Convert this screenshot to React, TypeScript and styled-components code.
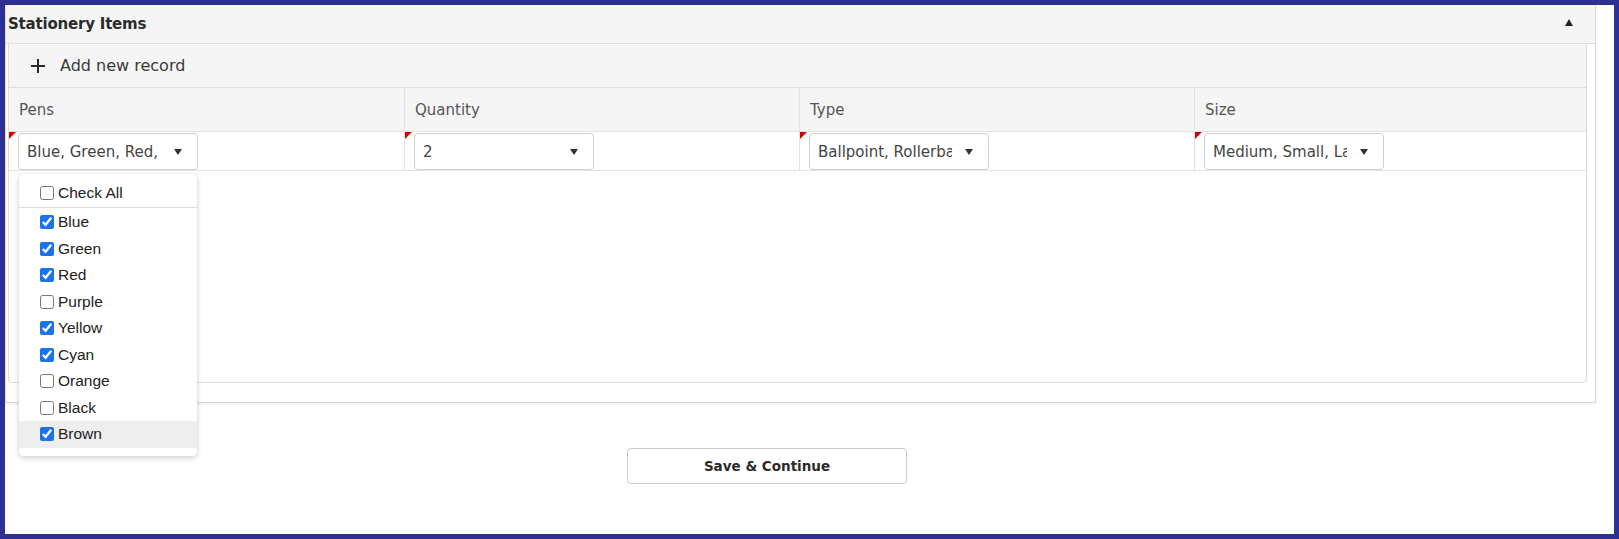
import * as React from 'react';
import styled, { createGlobalStyle } from 'styled-components';

const GlobalStyle = createGlobalStyle`
  html, body {
    margin: 0;
    padding: 0;
    background: #ffffff;
  }
  * {
    box-sizing: border-box;
  }
`;

const gothic = `"DejaVu Sans", "Liberation Sans", sans-serif`;
const arial = `"Liberation Sans", Arial, sans-serif`;

const Frame = styled.div`
  width: 1619px;
  height: 539px;
  border: 5px solid #2e3192;
  background: #ffffff;
  font-family: ${gothic};
  color: #333333;
`;

const Panel = styled.section`
  position: relative;
  height: 398px;
  margin-right: 18px;
  border: 1px solid #dadada;
  border-top: none;
  box-shadow: 0 1px 3px rgba(0, 0, 0, 0.08);
  display: flex;
  flex-direction: column;
`;

const PanelHeader = styled.header`
  height: 39px;
  flex: none;
  display: flex;
  align-items: center;
  justify-content: space-between;
  padding: 0 22px 0 2px;
  background: #f5f5f5;
  border-bottom: 1px solid #dddddd;
`;

const Title = styled.h2`
  margin: 0;
  font-size: 15px;
  font-weight: bold;
  color: #2b2b2b;
  letter-spacing: -0.2px;
`;

const CollapseArrow = styled.span`
  width: 0;
  height: 0;
  border-left: 4.5px solid transparent;
  border-right: 4.5px solid transparent;
  border-bottom: 7px solid #222222;
  margin-top: -4px;
`;

const PanelBody = styled.div`
  flex: 1;
  padding: 0 8px 19px 2px;
  display: flex;
`;

const Grid = styled.div`
  position: relative;
  flex: 1;
  display: flex;
  flex-direction: column;
  border: 1px solid #dddddd;
  border-top: none;
  border-radius: 0 0 4px 4px;
`;

const Toolbar = styled.div`
  height: 44px;
  flex: none;
  display: flex;
  align-items: center;
  gap: 14px;
  padding-left: 21px;
  background: #f5f5f5;
  border-bottom: 1px solid #dedede;
  font-size: 16px;
  color: #3a3a3a;
`;

const PlusIcon = styled.svg`
  width: 16px;
  height: 16px;
  display: block;
`;

const Row = styled.div<{ $head?: boolean }>`
  display: grid;
  grid-template-columns: 395px 395px 395px 1fr;
  height: ${({ $head }) => ($head ? '44px' : '39px')};
  flex: none;
  background: ${({ $head }) => ($head ? '#f5f5f5' : '#ffffff')};
  border-bottom: 1px solid #e3e3e3;
`;

const HeadCell = styled.div`
  display: flex;
  align-items: center;
  padding-left: 10px;
  font-size: 15px;
  color: #555555;
  border-left: 1px solid #e3e3e3;
  &:first-child {
    border-left: none;
  }
`;

const Cell = styled.div`
  position: relative;
  padding: 1px 0 0 9px;
  border-left: 1px solid #e3e3e3;
  &:first-child {
    border-left: none;
  }
`;

const Required = styled.span`
  position: absolute;
  left: 0;
  top: 0;
  width: 0;
  height: 0;
  border-top: 7px solid #d40000;
  border-right: 7px solid transparent;
`;

const Select = styled.div`
  position: relative;
  width: 180px;
  height: 37px;
  display: flex;
  align-items: center;
  padding: 0 0 0 8px;
  border: 1px solid #cfcfcf;
  border-radius: 4px;
  background: #ffffff;
  font-size: 15px;
  color: #444444;
`;

const SelectValue = styled.span`
  width: 134px;
  white-space: nowrap;
  overflow: hidden;
`;

const SelectArrow = styled.span`
  position: absolute;
  right: 15px;
  top: 15px;
  width: 0;
  height: 0;
  border-left: 4px solid transparent;
  border-right: 4px solid transparent;
  border-top: 6px solid #333333;
`;

const Filler = styled.div`
  flex: 1;
`;

const Popup = styled.div`
  position: absolute;
  left: 10px;
  top: 130px;
  width: 178px;
  padding: 5px 0 8px;
  background: #ffffff;
  border-radius: 4px;
  box-shadow: 0 2px 6px rgba(0, 0, 0, 0.18), 0 0 1px rgba(0, 0, 0, 0.2);
  z-index: 10;
  font-family: ${arial};
  font-size: 15.5px;
  color: #222222;
`;

const Option = styled.label<{ $all?: boolean; $hover?: boolean }>`
  display: flex;
  align-items: center;
  gap: 4px;
  height: ${({ $all }) => ($all ? '29px' : '26.5px')};
  padding-left: 21px;
  background: ${({ $hover }) => ($hover ? '#eeeeee' : 'transparent')};
  border-bottom: ${({ $all }) => ($all ? '1px solid #dddddd' : 'none')};
  margin-bottom: ${({ $all }) => ($all ? '1px' : '0')};
`;

const Check = styled.input`
  width: 14px;
  height: 14px;
  margin: 0;
  accent-color: #1a73e8;
`;

const Footer = styled.div`
  padding: 45px 0 0 622px;
`;

const SaveButton = styled.button`
  width: 280px;
  height: 36px;
  border: 1px solid #cccccc;
  border-radius: 4px;
  background: #ffffff;
  font-family: ${gothic};
  font-size: 13.5px;
  font-weight: bold;
  color: #2b2b2b;
  cursor: pointer;
`;

const pens = [
  { name: 'Blue', on: true },
  { name: 'Green', on: true },
  { name: 'Red', on: true },
  { name: 'Purple', on: false },
  { name: 'Yellow', on: true },
  { name: 'Cyan', on: true },
  { name: 'Orange', on: false },
  { name: 'Black', on: false },
  { name: 'Brown', on: true },
];

const columns = [
  { head: 'Pens', value: 'Blue, Green, Red, Yellow, Cyan, Brown' },
  { head: 'Quantity', value: '2' },
  { head: 'Type', value: 'Ballpoint, Rollerball' },
  { head: 'Size', value: 'Medium, Small, Large' },
];

export default function App() {
  return (
    <>
      <GlobalStyle />
      <Frame>
        <Panel>
          <PanelHeader>
            <Title>Stationery Items</Title>
            <CollapseArrow />
          </PanelHeader>
          <PanelBody>
            <Grid>
              <Toolbar>
                <PlusIcon viewBox="0 0 16 16">
                  <path d="M8 1v14M1 8h14" stroke="#2a2a2a" strokeWidth="2" fill="none" />
                </PlusIcon>
                Add new record
              </Toolbar>
              <Row $head>
                {columns.map(c => (
                  <HeadCell key={c.head}>{c.head}</HeadCell>
                ))}
              </Row>
              <Row>
                {columns.map(c => (
                  <Cell key={c.head}>
                    <Required />
                    <Select>
                      <SelectValue>{c.value}</SelectValue>
                      <SelectArrow />
                    </Select>
                  </Cell>
                ))}
              </Row>
              <Filler />
              <Popup>
                <Option $all>
                  <Check type="checkbox" readOnly checked={false} />
                  Check All
                </Option>
                {pens.map(p => (
                  <Option key={p.name} $hover={p.name === 'Brown'}>
                    <Check type="checkbox" readOnly checked={p.on} />
                    {p.name}
                  </Option>
                ))}
              </Popup>
            </Grid>
          </PanelBody>
        </Panel>
        <Footer>
          <SaveButton>Save &amp; Continue</SaveButton>
        </Footer>
      </Frame>
    </>
  );
}
